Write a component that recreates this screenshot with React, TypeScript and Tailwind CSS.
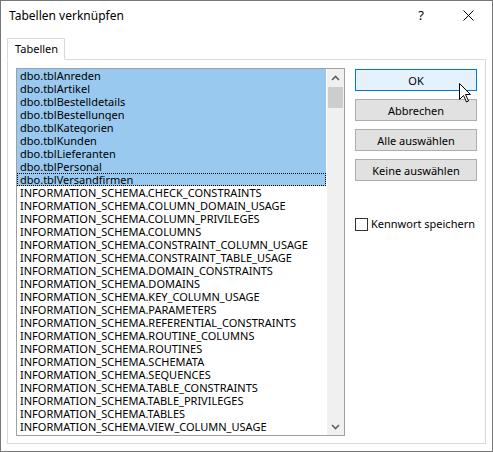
const tables = [
  "dbo.tblAnreden",
  "dbo.tblArtikel",
  "dbo.tblBestelldetails",
  "dbo.tblBestellungen",
  "dbo.tblKategorien",
  "dbo.tblKunden",
  "dbo.tblLieferanten",
  "dbo.tblPersonal",
  "dbo.tblVersandfirmen",
];

const schemaViews = [
  "CHECK_CONSTRAINTS",
  "COLUMN_DOMAIN_USAGE",
  "COLUMN_PRIVILEGES",
  "COLUMNS",
  "CONSTRAINT_COLUMN_USAGE",
  "CONSTRAINT_TABLE_USAGE",
  "DOMAIN_CONSTRAINTS",
  "DOMAINS",
  "KEY_COLUMN_USAGE",
  "PARAMETERS",
  "REFERENTIAL_CONSTRAINTS",
  "ROUTINE_COLUMNS",
  "ROUTINES",
  "SCHEMATA",
  "SEQUENCES",
  "TABLE_CONSTRAINTS",
  "TABLE_PRIVILEGES",
  "TABLES",
  "VIEW_COLUMN_USAGE",
];

function DialogButton({ label, primary }: { label: string; primary?: boolean }) {
  return (
    <button
      className={
        primary
          ? "h-[22px] w-[122px] border border-[#0078d7] bg-[#e5f1fb] text-[11px] leading-none text-black"
          : "h-[22px] w-[122px] border border-[#adadad] bg-[#e1e1e1] text-[11px] leading-none text-black"
      }
    >
      {label}
    </button>
  );
}

export default function App() {
  return (
    <div
      className="relative w-[493px] h-[452px] border border-[#777777] bg-white flex flex-col text-black select-none"
      style={{ fontFamily: '"Noto Sans", "Open Sans", sans-serif' }}
    >
      {/* Title bar */}
      <div className="h-[29px] flex items-center pl-[8px] text-[12px]">
        <span className="flex-1">Tabellen verknüpfen</span>
        <span className="w-[10px] text-[13px] mr-[37px] text-center">?</span>
        <svg width="11" height="11" viewBox="0 0 11 11" className="mr-[18px]">
          <path d="M0.5 0.5 L10.5 10.5 M10.5 0.5 L0.5 10.5" stroke="#000" strokeWidth="1" />
        </svg>
      </div>

      {/* Tab strip */}
      <div className="mt-[8px] ml-[6px] flex">
        <div className="relative z-10 -mb-px h-[22px] w-[58px] border border-[#d9d9d9] border-b-white bg-white flex items-center pl-[7px] text-[11px]">
          Tabellen
        </div>
      </div>

      {/* Tab panel */}
      <div className="ml-[6px] w-[479px] h-[385px] border border-[#d9d9d9] flex pl-[8px] pt-[8px]">
        {/* List box */}
        <div className="w-[329px] h-[368px] border border-[#a0a0a0] flex">
          <div className="flex-1 flex flex-col text-[11px] mr-px">
            {tables.map((t, i) => (
              <div
                key={t}
                className={
                  i === tables.length - 1
                    ? "h-[13px] pt-[1px] leading-[12px] pl-[3px] bg-[#99c9ef] outline-1 outline-dotted outline-black -outline-offset-1 whitespace-nowrap"
                    : "h-[13px] pt-[1px] leading-[12px] pl-[3px] bg-[#99c9ef] whitespace-nowrap"
                }
              >
                {t}
              </div>
            ))}
            {schemaViews.map((v) => (
              <div key={v} className="h-[13px] pt-[1px] leading-[12px] pl-[3px] whitespace-nowrap">
                INFORMATION_SCHEMA.{v}
              </div>
            ))}
          </div>

          {/* Scrollbar */}
          <div className="w-[17px] bg-[#f0f0f0] flex flex-col">
            <div className="h-[18px] flex items-center justify-center">
              <svg width="9" height="6" viewBox="0 0 9 6">
                <path d="M1 5 L4.5 1.5 L8 5" stroke="#606060" strokeWidth="1.6" fill="none" />
              </svg>
            </div>
            <div className="h-[21px] mx-px bg-[#cdcdcd]" />
            <div className="flex-1" />
            <div className="h-[17px] flex items-center justify-center">
              <svg width="9" height="6" viewBox="0 0 9 6">
                <path d="M1 1 L4.5 4.5 L8 1" stroke="#606060" strokeWidth="1.6" fill="none" />
              </svg>
            </div>
          </div>
        </div>

        {/* Buttons */}
        <div className="ml-[10px] pt-px flex flex-col gap-[8px]">
          <DialogButton label="OK" primary />
          <DialogButton label="Abbrechen" />
          <DialogButton label="Alle auswählen" />
          <DialogButton label="Keine auswählen" />
          <label className="mt-[27px] flex items-center gap-[3px] text-[11px]">
            <span className="w-[13px] h-[13px] border border-[#333333] bg-white" />
            Kennwort speichern
          </label>
        </div>
      </div>

      {/* Mouse pointer */}
      <svg
        width="13"
        height="20"
        viewBox="0 0 13 20"
        className="absolute left-[458px] top-[82px]"
      >
        <path
          d="M0.5 0.5 L0.5 16.5 L4.5 12.5 L7.5 19 L9.5 18 L6.5 11.5 L11.5 11.5 Z"
          fill="#fff"
          stroke="#000"
          strokeWidth="1"
          strokeLinejoin="miter"
        />
      </svg>
    </div>
  );
}
